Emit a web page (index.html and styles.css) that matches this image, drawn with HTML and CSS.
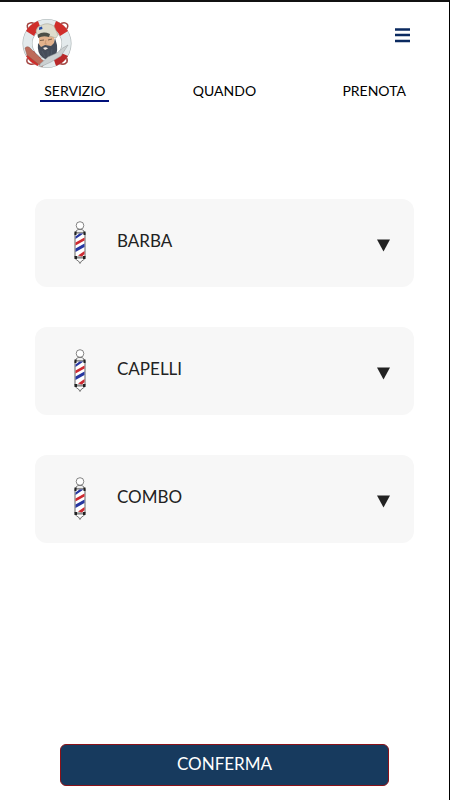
FILE: index.html
```html
<!DOCTYPE html>
<html lang="it">
<head>
<meta charset="utf-8">
<meta name="viewport" content="width=device-width, initial-scale=1">
<title>Servizio</title>
<link rel="stylesheet" href="styles.css">
</head>
<body>
<svg class="defs" aria-hidden="true">
  <symbol id="pole" viewBox="0 0 14 44">
    <circle cx="7" cy="4.500" r="3.800" fill="#fff" stroke="#666" stroke-width=".8"/>
    <path d="M3 12V10L5 8.500H9L11 10V12Z" fill="#eee" stroke="#555" stroke-width=".7"/>
    <path d="M2 37H12L10.500 39L8.500 40L7 42.500L5.500 40L3.500 39Z" fill="#fff" stroke="#555" stroke-width=".8"/>
    <rect x="2" y="12" width="10" height="24" fill="#fff" stroke="#666"/>
    <path d="M2.500 15.500L6.500 12.500H10.500L2.500 18Z M2.500 27.500L11.500 22.500V26L2.500 31Z" fill="#2636a0"/>
    <path d="M2.500 21.500L11.500 16.500V19.500L2.500 24.500Z M5 34.500L11.500 30V33L9 35.500Z" fill="#ce2930"/>
    <path d="M1.500 10.500H3.500V14H1.500ZM10.500 10.500H12.500V14H10.500ZM1.500 35H4V38H1.500ZM10 35H12.500V38H10Z" fill="#222"/>
  </symbol>
</svg>
<div class="page">
  <header class="header">
    <a class="logo" href="#" aria-label="Home">
      <svg viewBox="0 0 50 50">
        <path d="M7 12Q3 5 8 4Q12 3 14 7M37 6Q42 2 45 5Q47 7 44 11M6 38Q3 44 8 45Q12 46 14 43M37 44Q42 47 45 43Q46 40 43 37" fill="none" stroke="#a34642" stroke-width="1.500"/>
        <circle cx="25" cy="24.500" r="19.500" fill="none" stroke="#a8b1b2" stroke-width="10"/>
        <circle cx="25" cy="24.500" r="19.500" fill="none" stroke="#e3eaec" stroke-width="8.800"/>
        <g fill="#d02e2b">
          <path d="M4 12Q8 5 16 2L19 10Q14 12 12 17Z"/>
          <path d="M34 2Q42 5 46 12L38 17Q36 12 31 10Z"/>
          <path d="M4 37L12 32Q14 37 19 39L16 47Q8 44 4 37Z"/>
          <path d="M31 38L37 33L46 37Q42 44 34 47Z" fill="#b9292a"/>
        </g>
        <path d="M17 17L32 17L33 28L27 33L17 29Z" fill="#e3b28c"/>
        <path d="M16 24L19 28L23 26L29 27L32 24L33 19L35 26Q36 36 31 39Q26 43 20 38Q15 34 16 24Z" fill="#454c59"/>
        <path d="M20 32L23 38M30 30L29 37M26 32L26 39" stroke="#555f6c" stroke-width=".7"/>
        <path d="M21 29Q24 27.500 26 29.500L23 31Z" fill="#f3e7e0"/>
        <path d="M18 21.500L22 21M26 21L30 20" stroke="#7d604a"/>
        <path d="M24 21L23 25L25 25" fill="none" stroke="#c08d68" stroke-width=".7"/>
        <path d="M14 12Q15 7 20 6Q26 3 32 7L36 16L34 19Q24 15 16 18Z" fill="#dedccd" stroke="#a8a698" stroke-width=".6"/>
        <path d="M16 15.500Q21 12 28 15L27 18Q21 16 16 19Z" fill="#4d4f46"/>
        <path d="M17 8.500L20 7.500L20.500 10L17 11Z" fill="#254da3"/>
        <path d="M3 29Q6 26 9 30L18 39L23 43L20 48L15 44L5 36Z" fill="#bd6b5a" stroke="#8b574c" stroke-width=".5"/>
        <path d="M46 26Q41 28 35 34L26 38L18 45L18 48L29 43L39 37Z" fill="#cbd0d1" stroke="#969d9f" stroke-width=".5"/>
      </svg>
    </a>
    <button class="menu" type="button" aria-label="Menu">
      <svg viewBox="0 0 16 16"><path d="M0 2.500H15M0 8H15M0 14H15" stroke="#0b2a60" stroke-width="2.500"/></svg>
    </button>
  </header>
  <nav class="tabs">
    <a class="tab active" href="#" aria-current="page">SERVIZIO</a>
    <a class="tab" href="#">QUANDO</a>
    <a class="tab" href="#">PRENOTA</a>
  </nav>
  <main class="services">
    <button class="card" type="button">
      <svg class="pole"><use href="#pole"/></svg>
      <span class="name">BARBA</span>
      <svg class="arrow" viewBox="0 0 14 13"><path d="M0 0H14L7 13Z"/></svg>
    </button>
    <button class="card" type="button">
      <svg class="pole"><use href="#pole"/></svg>
      <span class="name">CAPELLI</span>
      <svg class="arrow" viewBox="0 0 14 13"><path d="M0 0H14L7 13Z"/></svg>
    </button>
    <button class="card" type="button">
      <svg class="pole"><use href="#pole"/></svg>
      <span class="name">COMBO</span>
      <svg class="arrow" viewBox="0 0 14 13"><path d="M0 0H14L7 13Z"/></svg>
    </button>
  </main>
  <footer class="footer">
    <button class="confirm" type="button">CONFERMA</button>
  </footer>
</div>
</body>
</html>
```
FILE: styles.css
```css
* {
  box-sizing: border-box;
}

body {
  margin: 0;
  background: #fff;
  color: #000;
  font-family: Lato, "Liberation Sans", sans-serif;
}

button {
  font-family: inherit;
  cursor: pointer;
}

.defs {
  position: absolute;
  width: 0;
  height: 0;
}

.page {
  display: flex;
  flex-direction: column;
  min-height: 100vh;
  border-top: 2px solid #111;
  border-right: 1px solid #000;
}

.header {
  display: flex;
  justify-content: space-between;
  align-items: flex-start;
  padding: 16px 38px 0 22px;
}

.logo,
.logo svg {
  display: block;
  width: 50px;
  height: 52px;
}

.menu {
  margin-top: 9px;
  padding: 0;
  border: 0;
  background: none;
}

.menu svg {
  display: block;
  width: 16px;
  height: 16px;
}

.tabs {
  display: grid;
  grid-template-columns: repeat(3, 1fr);
  justify-items: center;
  padding-top: 12px;
}

.tab {
  padding: 0 4px;
  border-bottom: 2px solid transparent;
  color: inherit;
  font-size: 14px;
  line-height: 18px;
  text-decoration: none;
}

.tab.active {
  border-color: #00107a;
}

.services {
  display: flex;
  flex-direction: column;
  gap: 40px;
  padding: 97px 35px 40px;
}

.card {
  display: flex;
  align-items: center;
  min-height: 88px;
  padding: 0 24px 0 38px;
  border: 0;
  border-radius: 12px;
  background: #f7f7f7;
  color: #222;
  font-size: 17px;
  line-height: 24px;
  text-align: left;
}

.pole {
  width: 14px;
  height: 44px;
}

.name {
  flex: 1;
  padding: 0 0 4px 30px;
}

.arrow {
  width: 13px;
  height: 13px;
  margin-top: 5px;
  fill: #222;
}

.footer {
  margin-top: auto;
  padding: 0 60px 14px;
}

.confirm {
  display: block;
  width: 100%;
  padding: 8px 8px 10px;
  border: 1px solid #8b1218;
  border-radius: 6px;
  background: #173a5e;
  color: #fff;
  font-size: 17px;
  line-height: 22px;
}
```
